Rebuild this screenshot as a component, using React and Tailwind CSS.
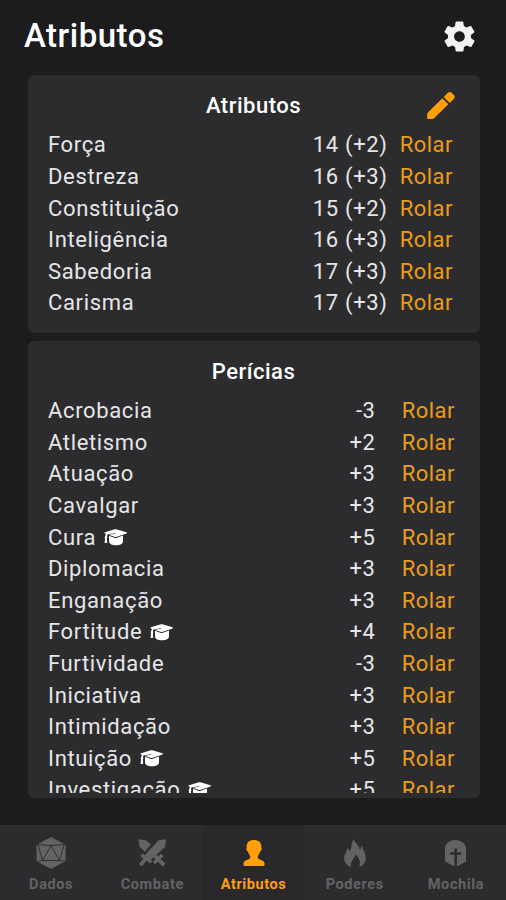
import { IoMdSettings } from 'react-icons/io'

const attributes = [
  { name: 'Força', value: '14 (+2)' },
  { name: 'Destreza', value: '16 (+3)' },
  { name: 'Constituição', value: '15 (+2)' },
  { name: 'Inteligência', value: '16 (+3)' },
  { name: 'Sabedoria', value: '17 (+3)' },
  { name: 'Carisma', value: '17 (+3)' },
]

const skills = [
  { name: 'Acrobacia', value: '-3' },
  { name: 'Atletismo', value: '+2' },
  { name: 'Atuação', value: '+3' },
  { name: 'Cavalgar', value: '+3' },
  { name: 'Cura', value: '+5', trained: true },
  { name: 'Diplomacia', value: '+3' },
  { name: 'Enganação', value: '+3' },
  { name: 'Fortitude', value: '+4', trained: true },
  { name: 'Furtividade', value: '-3' },
  { name: 'Iniciativa', value: '+3' },
  { name: 'Intimidação', value: '+3' },
  { name: 'Intuição', value: '+5', trained: true },
  { name: 'Investigação', value: '+5', trained: true },
]

function PencilIcon({ className }) {
  return (
    <svg className={className} fill="currentColor" viewBox="0 0 28 28">
      <path d="M15.300 6.300 L21.300 12.300 L7.200 26.200 C6.600 26.800 6 27 5.200 27 H1.200 C0.500 27 0.200 26.700 0.200 26 V22.500 C0.200 21.600 0.600 20.900 1.200 20.300 Z" />
      <path d="M16.700 4.900 L20.700 0.900 C22 -0.300 23.600 -0.300 24.800 0.900 L26.900 3 C28 4.200 28 5.700 26.800 6.900 L22.700 10.900 Z" />
    </svg>
  )
}

function TrainedIcon({ className }) {
  return (
    <svg className={className} fill="currentColor" viewBox="0 0 23 17">
      <path d="M12.300 0.300 L22.500 3.200 C23.100 3.500 23.100 4.100 22.500 4.400 L12.800 7.800 C12 8.100 11.200 8.100 10.400 7.800 L4.500 5.800 L11.500 4.800 L11.300 4.300 L3.900 5.300 C3.200 5.800 3 6.500 2.900 7.300 C3.600 8 3.500 8.800 2.900 9.300 L3.200 14 H0.600 L1.100 9.300 C0.500 8.800 0.500 8 1.200 7.300 C1.200 6.300 1.500 5.500 2.100 5 L0.900 4.400 C0.300 4.100 0.300 3.500 0.900 3.200 L10.900 0.300 C11.400 0.200 11.800 0.200 12.300 0.300 Z" />
      <path d="M5 6.700 L10.300 8.700 C11.200 9 12 9 12.900 8.700 L19 6.500 V12.500 C19 14.700 16 16.300 12 16.300 C8 16.300 5 14.700 5 12.500 Z" />
    </svg>
  )
}

function D20Icon({ className }) {
  return (
    <svg className={className} fill="currentColor" viewBox="0 0 30 32">
      <path d="M15 0 L29.500 7.800 V24.200 L15 32 L0.500 24.200 V7.800 Z" />
      <path
        className="stroke-[#303032]"
        d="M15 8.500 L6.500 23.500 H23.500 Z M15 8.500 L1 7.500 M15 8.500 L29 7.500 M6.500 23.500 L2 8 M23.500 23.500 L28 8 M6.500 23.500 L1 24.500 M23.500 23.500 L29 24.500"
        fill="none"
        strokeWidth="1"
      />
    </svg>
  )
}

function SwordsIcon({ className }) {
  return (
    <svg className={className} fill="currentColor" viewBox="0 0 28 28">
      <path d="M0.300 0.300 L8 1.200 L12.800 5.800 L6.800 12.800 L1.500 7.500 Z" />
      <path d="M28 0.300 L27 8 L13 20.500 L14.300 22 L11.800 24.500 L8.800 21.500 L6 24.500 L4 27.500 L0.800 25 L5.500 20 L2.200 17 L4.800 14.500 L6.800 16.300 L20.500 1.200 Z" />
      <path d="M20.500 17.200 L23 14.800 L25.700 17.200 L22.500 19.900 L27.700 24.800 L24.800 27.700 L20 22.700 L17 25.200 L14.800 22.800 L17.300 20.300 L15.500 18.500 L18.500 15.500 Z" />
    </svg>
  )
}

function BustIcon({ className }) {
  return (
    <svg className={className} fill="currentColor" viewBox="0 0 22 28">
      <path d="M11 1 C6.500 1 3.700 3.200 3.700 7 C3.700 8 3.900 8.700 3.400 9.200 C3.200 10.700 4 12.200 5 12.700 C5.500 15 7.300 16.500 7.300 18 C7.300 21.500 0.500 20.500 0.500 24.500 V25.500 C0.500 26.500 1 27 2 27 H20 C21 27 21.500 26.500 21.500 25.500 V24.500 C21.500 20.500 14.700 21.500 14.700 18 C14.700 16.500 16.500 15 17 12.700 C18 12.200 18.800 10.700 18.600 9.200 C18.100 8.700 18.300 8 18.300 7 C18.300 3.200 15.500 1 11 1 Z" />
    </svg>
  )
}

function FlameIcon({ className }) {
  return (
    <svg className={className} fill="currentColor" viewBox="0 0 22 28">
      <path d="M10 0 C10.500 4 15.500 6 15.800 11 C17 9.800 17.300 8 17 6.200 C19 8 19 11 20.500 13.500 C23 19 22 25.500 15.200 28 C17 23 15.500 18.500 11.500 15.500 C11.300 19 5.500 22 7 28 C0.500 25.500 -1.500 19.500 1.500 14.500 C2.800 12.300 3 10.500 3 9 C4.500 10 5.200 11 5.500 12.500 C8.500 9 6.500 4.500 10 0 Z" />
    </svg>
  )
}

function HelmetIcon({ className }) {
  return (
    <svg className={className} fill="currentColor" viewBox="0 0 21 27">
      <path d="M10.500 0 C16.500 0 21 3.500 21 9 V21.500 L12 26.500 V14.800 H16.200 V12.300 H12 V8.500 H9.400 V12.300 H5 V14.800 H9.400 V26.500 L0 21.500 V9 C0 3.500 4.500 0 10.500 0 Z" />
    </svg>
  )
}

const tabs = [
  { label: 'Dados', icon: D20Icon, size: 'h-8 w-[30px]' },
  { label: 'Combate', icon: SwordsIcon, size: 'h-7 w-7' },
  { label: 'Atributos', icon: BustIcon, size: 'h-7 w-[22px]', active: true },
  { label: 'Poderes', icon: FlameIcon, size: 'h-7 w-[22px]' },
  { label: 'Mochila', icon: HelmetIcon, size: 'h-[27px] w-[21px]' },
]

function StatRow({ item, valueClassName }) {
  return (
    <div className="flex h-[31.6px] items-center">
      <span>{item.name}</span>
      {item.trained && (
        <TrainedIcon className="ml-2 h-[17px] w-[23px] text-white" />
      )}
      <span className={`ml-auto ${valueClassName}`}>{item.value}</span>
      <button className="tracking-[0.5px] text-[#eb9c1b]" type="button">
        Rolar
      </button>
    </div>
  )
}

function TabItem({ tab }) {
  const Icon = tab.icon

  return (
    <button
      className={`flex flex-1 flex-col items-center pl-px ${
        tab.active ? 'bg-[#29292b] text-[#ff9f0a]' : 'text-[#636365]'
      }`}
      type="button"
    >
      <span className="mt-3 flex h-8 items-center">
        <Icon className={tab.size} />
      </span>
      <span className="mt-1.5 text-[14.5px] leading-5 font-bold tracking-[0.6px]">
        {tab.label}
      </span>
    </button>
  )
}

function App() {
  return (
    <div className="flex h-[900px] w-[506px] flex-col overflow-hidden bg-[#1c1c1e] font-['Roboto',sans-serif] text-[22px] leading-7 tracking-[0.65px] text-[#e6e6e8]">
      <header className="flex h-[75px] items-center justify-between pr-7 pb-[3px] pl-6">
        <h1 className="text-[33px] leading-10 font-medium tracking-[0.5px] text-white">
          Atributos
        </h1>
        <IoMdSettings className="h-[37px] w-[37px] text-[#f4f4f6]" />
      </header>

      <main className="flex flex-1 flex-col gap-2 pr-[26px] pl-7">
        <section className="h-[258px] rounded-md bg-[#2c2c2e] pr-[27px] pl-5">
          <div className="flex h-[54.6px] items-center pt-2">
            <span className="w-8" />
            <h2 className="flex-1 text-center font-medium tracking-[0.5px] text-white">
              Atributos
            </h2>
            <PencilIcon className="-mr-0.5 h-7 w-7 text-[#ff9f0a]" />
          </div>
          {attributes.map((item) => (
            <StatRow item={item} key={item.name} valueClassName="mr-3" />
          ))}
        </section>

        <section className="h-[457px] rounded-md bg-[#2c2c2e] pr-[25px] pl-5">
          <h2 className="flex h-[54px] items-center justify-center pt-2 pl-1 font-medium tracking-[0.5px] text-white">
            Perícias
          </h2>
          <div className="h-[398px] overflow-hidden pt-[0.4px]">
            {skills.map((item) => (
              <StatRow item={item} key={item.name} valueClassName="mr-[26px]" />
            ))}
          </div>
        </section>
      </main>

      <nav className="flex h-[75px] bg-[#2c2c2e]">
        {tabs.map((tab) => (
          <TabItem key={tab.label} tab={tab} />
        ))}
      </nav>
    </div>
  )
}

export default App
